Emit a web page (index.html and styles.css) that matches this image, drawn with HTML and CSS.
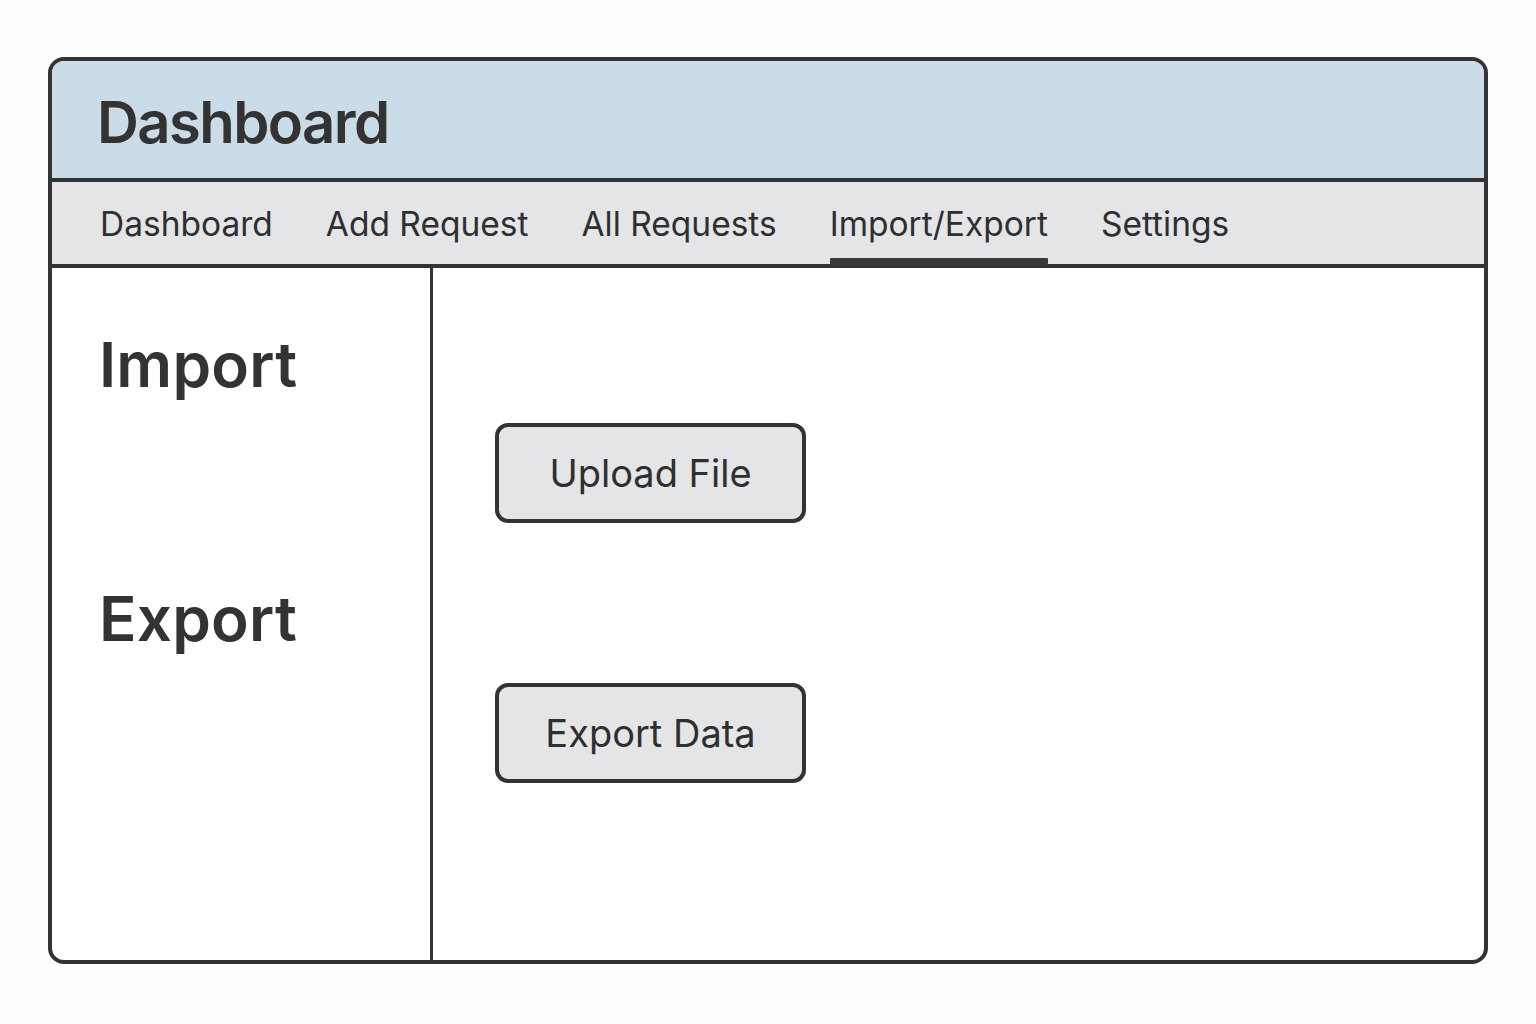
FILE: index.html
```html
<!DOCTYPE html>
<html lang="en">
<head>
<meta charset="utf-8">
<title>Dashboard</title>
<link rel="stylesheet" href="styles.css">
</head>
<body>
<div class="frame">
  <header class="header"><h1 class="title">Dashboard</h1></header>
  <nav class="nav">
    <a class="tab">Dashboard</a>
    <a class="tab">Add Request</a>
    <a class="tab">All Requests</a>
    <a class="tab active">Import/Export</a>
    <a class="tab">Settings</a>
  </nav>
  <div class="body">
    <aside class="side">
      <h2 class="side-title">Import</h2>
      <h2 class="side-title export">Export</h2>
    </aside>
    <main class="main">
      <button class="btn">Upload File</button>
      <button class="btn second">Export Data</button>
    </main>
  </div>
</div>
</body>
</html>
```
FILE: styles.css
```css
* { box-sizing: border-box; }
html, body { margin: 0; padding: 0; }
body {
  background: #fdfdfd;
  font-family: Inter, "Noto Sans", sans-serif;
  color: #333333;
  width: 1536px;
  height: 1024px;
  padding: 57px 48px 0 48px;
}
.frame {
  width: 1440px;
  height: 907px;
  border: 4px solid #333333;
  border-radius: 16px;
  overflow: hidden;
  display: flex;
  flex-direction: column;
  background: #ffffff;
}
.header {
  height: 121px;
  background: #c9dce8;
  border-bottom: 4px solid #333333;
  display: flex;
  align-items: center;
  padding-left: 45px;
  padding-top: 4px;
  flex: none;
}
.title {
  margin: 0;
  font-size: 58px;
  font-weight: 600;
  letter-spacing: -1.6px;
  line-height: 1;
  color: #333333;
}
.nav {
  height: 86px;
  background: #e4e5e7;
  border-bottom: 4px solid #333333;
  display: flex;
  align-items: stretch;
  padding-left: 48px;
  gap: 53px;
  flex: none;
}
.tab {
  font-size: 33.5px;
  font-weight: 400;
  color: #2f2f2f;
  display: flex;
  align-items: center;
  padding-top: 1px;
  position: relative;
}
.tab.active::after {
  content: "";
  position: absolute;
  left: 0;
  right: 0;
  bottom: -1px;
  height: 7px;
  background: #3a3a3a;
  border-radius: 1px 1px 0 0;
}
.body {
  flex: 1;
  display: flex;
}
.side {
  width: 381px;
  border-right: 3px solid #333333;
  padding: 61px 0 0 47px;
  display: flex;
  flex-direction: column;
  flex: none;
}
.side-title {
  margin: 0;
  font-size: 62px;
  font-weight: 600;
  letter-spacing: 0.2px;
  line-height: 72px;
  color: #333333;
}
.side-title.export { margin-top: 182px; }
.main {
  flex: 1;
  padding: 155px 0 0 62px;
  display: flex;
  flex-direction: column;
  align-items: flex-start;
  gap: 160px;
}
.btn {
  width: 311px;
  height: 100px;
  border: 4.5px solid #333333;
  border-radius: 13px;
  background: #e4e5e7;
  font-family: Inter, "Noto Sans", sans-serif;
  font-size: 38px;
  font-weight: 400;
  color: #2f2f2f;
  padding: 0;
}
```
